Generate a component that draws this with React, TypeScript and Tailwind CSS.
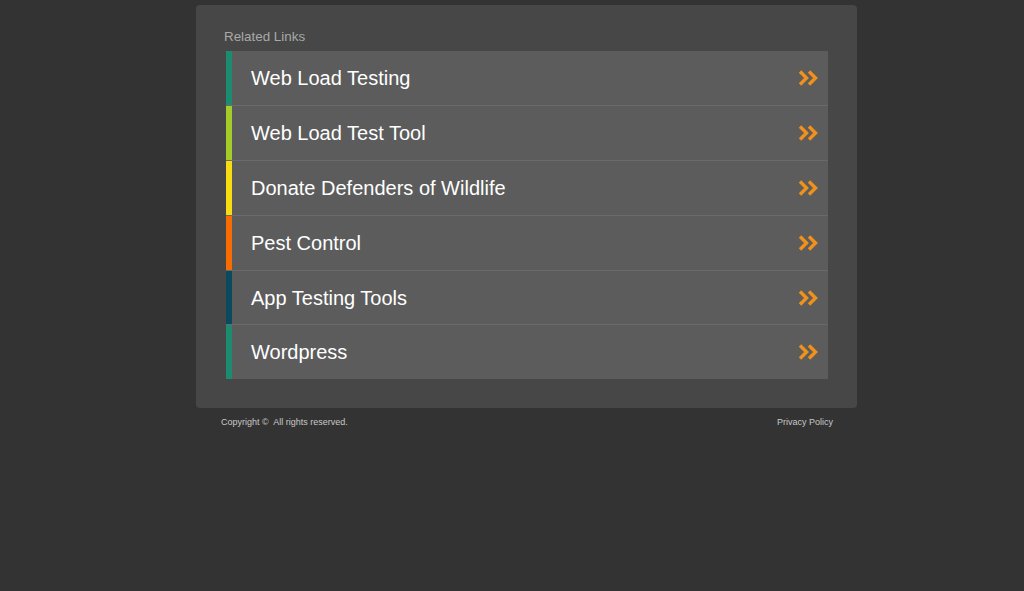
import React from "react";

const links = [
  { title: "Web Load Testing", color: "#1b8c6f" },
  { title: "Web Load Test Tool", color: "#a6cc2a" },
  { title: "Donate Defenders of Wildlife", color: "#f7dc12" },
  { title: "Pest Control", color: "#f76d02" },
  { title: "App Testing Tools", color: "#0b4a5c" },
  { title: "Wordpress", color: "#1b8c6f" },
];

function DoubleChevron() {
  return (
    <svg width="20" height="16" viewBox="0 0 20 16" fill="none">
      <path d="M2 1.5 L8.5 8 L2 14.5" stroke="#ef911c" strokeWidth="3.4" strokeLinejoin="miter" />
      <path d="M11 1.5 L17.5 8 L11 14.5" stroke="#ef911c" strokeWidth="3.4" strokeLinejoin="miter" />
    </svg>
  );
}

export default function App() {
  return (
    <div
      className="min-h-screen w-full bg-[#333333] pt-[5px]"
      style={{ fontFamily: "Arial, 'Liberation Sans', Helvetica, sans-serif" }}
    >
      <div className="ml-[196px] w-[661px]">
        <div className="rounded-[4px] bg-[#474747] pl-[28px] pr-[29px] pt-[21px] pb-[29px]">
          <h3 className="mb-[3px] text-[13.4px] leading-[22px] text-[#a9a9a9]">Related Links</h3>
          <ul className="ml-[2px] flex flex-col">
            {links.map((link, i) => (
              <li
                key={i}
                className={
                  i < links.length - 1
                    ? "flex h-[54.9px] items-stretch border-b border-[#6a6a6a] bg-[#5c5c5c]"
                    : "flex h-[54px] items-stretch bg-[#5c5c5c]"
                }
              >
                <div className="w-[6px] shrink-0" style={{ background: link.color }} />
                <div className="flex flex-1 items-center justify-between pl-[19px] pr-[10px]">
                  <span className="text-[20px] text-white">{link.title}</span>
                  <DoubleChevron />
                </div>
              </li>
            ))}
          </ul>
        </div>
        <div className="flex justify-between pl-[25px] pr-[24px] pt-[8px] text-[9px] text-[#c8c8c8]">
          <span>Copyright ©&nbsp; All rights reserved.</span>
          <span>Privacy Policy</span>
        </div>
      </div>
    </div>
  );
}
